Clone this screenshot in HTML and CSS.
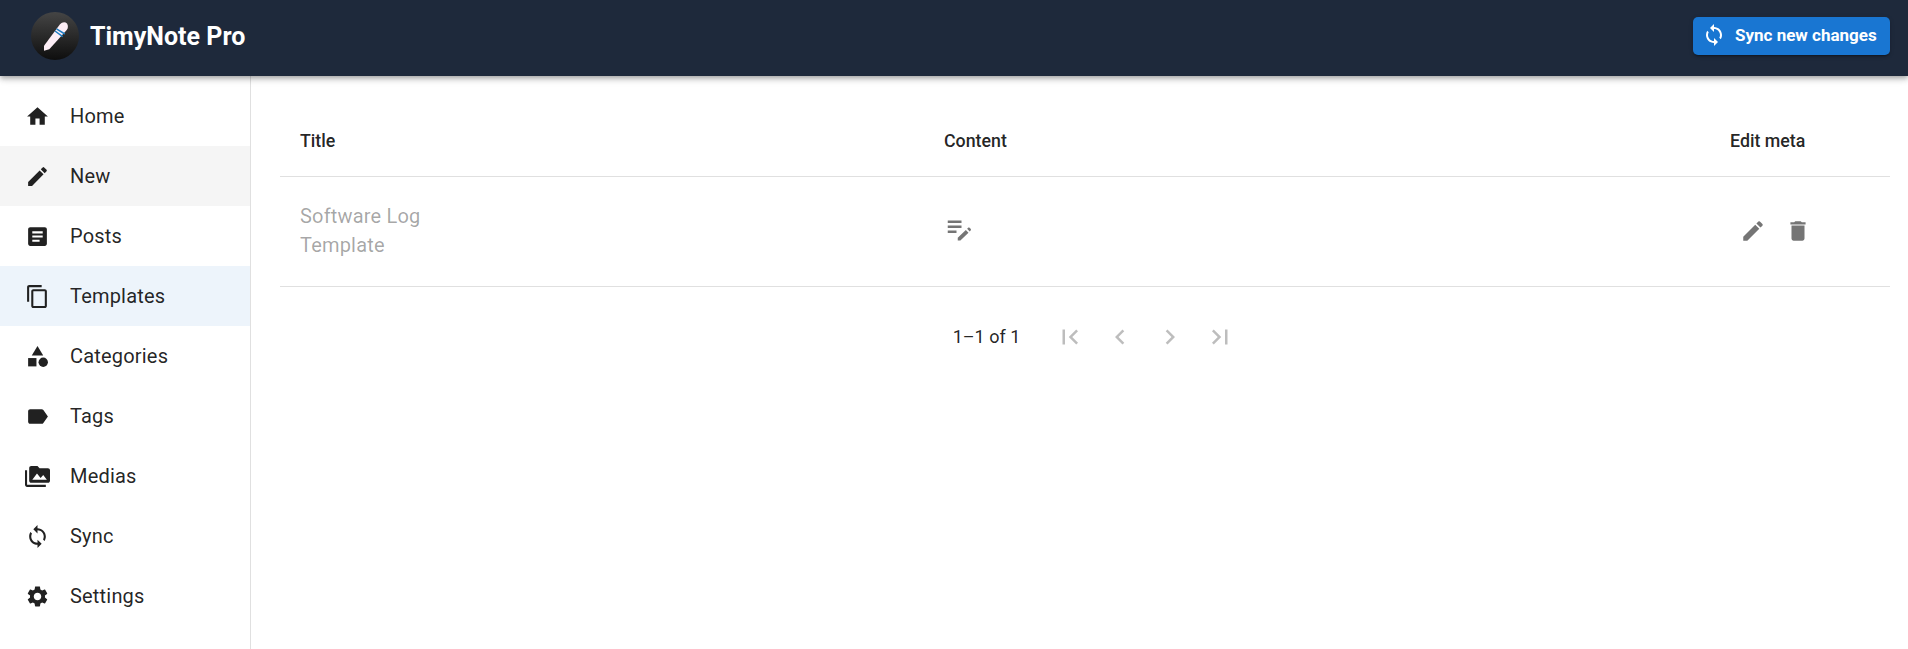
FILE: index.html
```html
<!DOCTYPE html>
<html lang="en">
<head>
    <meta charset="UTF-8">
    <meta name="viewport" content="width=device-width, initial-scale=1.0">
    <title>TimyNote Pro</title>
    <link rel="stylesheet" href="styles.css">
</head>
<body>
    <header class="topbar">
        <div class="brand">
            <svg class="brand-logo" viewBox="0 0 48 48">
                <defs>
                    <linearGradient id="logoFill" x1="0" y1="0" x2="0" y2="1">
                        <stop offset="0" stop-color="#454545"/>
                        <stop offset="1" stop-color="#0e0e0e"/>
                    </linearGradient>
                </defs>
                <circle cx="24" cy="24" r="24" fill="url(#logoFill)"/>
                <path d="M13 38.7 13 33.7 29 12.3C31 10 34 9.5 36 11.5 37.5 13.5 37 16.5 35.7 18L18.3 37.3Z" fill="#fdeef6"/>
                <path d="M25.5 16.8 33.8 22M24 19 31.7 24.7" stroke="#1f7fc4" stroke-width="1.5" fill="none"/>
            </svg>
            <span class="brand-name">TimyNote Pro</span>
        </div>
        <button class="sync-btn">
            <svg class="icon" viewBox="0 0 24 24"><path d="M12 4V1L8 5l4 4V6c3.31 0 6 2.69 6 6 0 1.01-.25 1.97-.7 2.8l1.46 1.46C19.54 15.03 20 13.57 20 12c0-4.42-3.58-8-8-8zm0 14c-3.31 0-6-2.69-6-6 0-1.01.25-1.97.7-2.8L5.24 7.74C4.46 8.97 4 10.43 4 12c0 4.42 3.58 8 8 8v3l4-4-4-4v3z"/></svg>
            Sync new changes
        </button>
    </header>

    <div class="layout">
        <nav class="sidebar">
            <a class="nav-item">
                <svg class="icon" viewBox="0 0 24 24"><path d="M10 20v-6h4v6h5v-8h3L12 3 2 12h3v8z"/></svg>
                Home
            </a>
            <a class="nav-item hovered">
                <svg class="icon" viewBox="0 0 24 24"><path d="M3 17.25V21h3.75L17.81 9.94l-3.75-3.75L3 17.25zM20.71 7.04c.39-.39.39-1.02 0-1.41l-2.34-2.34a.9959.9959 0 0 0-1.41 0l-1.83 1.83 3.75 3.75 1.83-1.83z"/></svg>
                New
            </a>
            <a class="nav-item">
                <svg class="icon" viewBox="0 0 24 24"><path d="M19 3H5c-1.1 0-2 .9-2 2v14c0 1.1.9 2 2 2h14c1.1 0 2-.9 2-2V5c0-1.1-.9-2-2-2zm-5 14H7v-2h7v2zm3-4H7v-2h10v2zm0-4H7V7h10v2z"/></svg>
                Posts
            </a>
            <a class="nav-item selected">
                <svg class="icon" viewBox="0 0 24 24"><path d="M16 1H4c-1.1 0-2 .9-2 2v14h2V3h12V1zm3 4H8c-1.1 0-2 .9-2 2v14c0 1.1.9 2 2 2h11c1.1 0 2-.9 2-2V7c0-1.1-.9-2-2-2zm0 16H8V7h11v14z"/></svg>
                Templates
            </a>
            <a class="nav-item">
                <svg class="icon" viewBox="0 0 24 24"><path d="M12 2l-5.5 9h11z"/><circle cx="17.5" cy="17.5" r="4.5"/><path d="M3 13.5h8v8H3z"/></svg>
                Categories
            </a>
            <a class="nav-item">
                <svg class="icon" viewBox="0 0 24 24"><path d="M17.63 5.84C17.27 5.33 16.67 5 16 5L5 5.01C3.9 5.01 3 5.9 3 7v10c0 1.1.9 1.99 2 1.99L16 19c.67 0 1.27-.33 1.63-.84L22 12l-4.37-6.16z"/></svg>
                Tags
            </a>
            <a class="nav-item">
                <svg class="icon" viewBox="0 0 24 24"><path d="M2 6H0v5h.01L0 20c0 1.1.9 2 2 2h18v-2H2V6zm20-2h-8l-2-2H6c-1.1 0-1.99.9-1.99 2L4 16c0 1.1.9 2 2 2h16c1.1 0 2-.9 2-2V6c0-1.1-.9-2-2-2zM7 15l4.5-6 3.5 4.51 2.5-3.01L21 15H7z"/></svg>
                Medias
            </a>
            <a class="nav-item">
                <svg class="icon" viewBox="0 0 24 24"><path d="M12 4V1L8 5l4 4V6c3.31 0 6 2.69 6 6 0 1.01-.25 1.97-.7 2.8l1.46 1.46C19.54 15.03 20 13.57 20 12c0-4.42-3.58-8-8-8zm0 14c-3.31 0-6-2.69-6-6 0-1.01.25-1.97.7-2.8L5.24 7.74C4.46 8.97 4 10.43 4 12c0 4.42 3.58 8 8 8v3l4-4-4-4v3z"/></svg>
                Sync
            </a>
            <a class="nav-item">
                <svg class="icon" viewBox="0 0 24 24"><path d="M19.14 12.94c.04-.3.06-.61.06-.94 0-.32-.02-.64-.07-.94l2.03-1.58c.18-.14.23-.41.12-.61l-1.92-3.32c-.12-.22-.37-.29-.59-.22l-2.39.96c-.5-.38-1.03-.7-1.62-.94l-.36-2.54c-.04-.24-.24-.41-.48-.41h-3.84c-.24 0-.43.17-.47.41l-.36 2.54c-.59.24-1.13.57-1.62.94l-2.39-.96c-.22-.08-.47 0-.59.22L2.74 8.87c-.12.21-.08.47.12.61l2.03 1.58c-.05.3-.09.63-.09.94s.02.64.07.94l-2.03 1.58c-.18.14-.23.41-.12.61l1.92 3.32c.12.22.37.29.59.22l2.39-.96c.5.38 1.03.7 1.62.94l.36 2.54c.05.24.24.41.48.41h3.84c.24 0 .44-.17.47-.41l.36-2.54c.59-.24 1.13-.56 1.62-.94l2.39.96c.22.08.47 0 .59-.22l1.92-3.32c.12-.22.07-.47-.12-.61l-2.01-1.58zM12 15.6c-1.98 0-3.6-1.62-3.6-3.6s1.62-3.6 3.6-3.6 3.6 1.62 3.6 3.6-1.62 3.6-3.6 3.6z"/></svg>
                Settings
            </a>
        </nav>

        <main class="content">
            <table class="data-table">
                <colgroup>
                    <col class="col-title">
                    <col class="col-content">
                    <col class="col-meta">
                </colgroup>
                <thead>
                    <tr>
                        <th>Title</th>
                        <th>Content</th>
                        <th>Edit meta</th>
                    </tr>
                </thead>
                <tbody>
                    <tr>
                        <td class="title-cell">Software Log<br>Template</td>
                        <td>
                            <button class="icon-btn content-btn">
                                <svg class="icon" viewBox="0 0 24 24"><path d="M3 10h11v2H3zm0-4h11v2H3zm0 8h7v2H3zm17.59-2.07.71.71c.39.39.39 1.02 0 1.41l-.71.71-2.12-2.12.71-.71c.39-.39 1.02-.39 1.41 0zM17.47 13.64l2.12 2.12L13.12 22H11v-2.12z"/></svg>
                            </button>
                        </td>
                        <td>
                            <div class="row-actions">
                                <button class="icon-btn">
                                    <svg class="icon" viewBox="0 0 24 24"><path d="M3 17.25V21h3.75L17.81 9.94l-3.75-3.75L3 17.25zM20.71 7.04c.39-.39.39-1.02 0-1.41l-2.34-2.34a.9959.9959 0 0 0-1.41 0l-1.83 1.83 3.75 3.75 1.83-1.83z"/></svg>
                                </button>
                                <button class="icon-btn">
                                    <svg class="icon" viewBox="0 0 24 24"><path d="M6 19c0 1.1.9 2 2 2h8c1.1 0 2-.9 2-2V7H6v12zM19 4h-3.5l-1-1h-5l-1 1H5v2h14V4z"/></svg>
                                </button>
                            </div>
                        </td>
                    </tr>
                </tbody>
            </table>

            <div class="pagination">
                <span class="page-count">1–1 of 1</span>
                <div class="page-btns">
                    <button class="page-btn" disabled>
                        <svg class="icon" viewBox="0 0 24 24"><path d="M18.41 16.59 13.82 12l4.59-4.59L17 6l-6 6 6 6zM6 6h2v12H6z"/></svg>
                    </button>
                    <button class="page-btn" disabled>
                        <svg class="icon" viewBox="0 0 24 24"><path d="M15.41 7.41 14 6l-6 6 6 6 1.41-1.41L10.83 12z"/></svg>
                    </button>
                    <button class="page-btn" disabled>
                        <svg class="icon" viewBox="0 0 24 24"><path d="M10 6 8.59 7.41 13.17 12l-4.58 4.59L10 18l6-6z"/></svg>
                    </button>
                    <button class="page-btn" disabled>
                        <svg class="icon" viewBox="0 0 24 24"><path d="M5.59 7.41 10.18 12l-4.59 4.59L7 18l6-6-6-6zM16 6h2v12h-2z"/></svg>
                    </button>
                </div>
            </div>
        </main>
    </div>
</body>
</html>
```

FILE: styles.css
```css
* {
    box-sizing: border-box;
}

html, body {
    height: 100%;
}

body {
    margin: 0;
    display: flex;
    flex-direction: column;
    overflow: hidden;
    font-family: Roboto, "Liberation Sans", sans-serif;
    color: rgba(0, 0, 0, 0.87);
    background-color: #fff;
}

.icon {
    display: block;
    fill: currentColor;
}

/* top bar */
.topbar {
    position: relative;
    z-index: 2;
    flex: 0 0 76px;
    display: flex;
    align-items: center;
    justify-content: space-between;
    padding: 0 18px 4px 31px;
    background-color: #1e293b;
    box-shadow: 0 2px 4px -1px rgba(0, 0, 0, 0.2), 0 4px 5px 0 rgba(0, 0, 0, 0.14), 0 1px 10px 0 rgba(0, 0, 0, 0.12);
}

.brand {
    display: flex;
    align-items: center;
    gap: 11px;
}

.brand-logo {
    display: block;
    width: 48px;
    height: 48px;
}

.brand-name {
    font-size: 25px;
    font-weight: 700;
    color: #fff;
}

.sync-btn {
    display: flex;
    align-items: center;
    gap: 9px;
    width: 197px;
    height: 38px;
    padding: 0 0 3px 9px;
    border: none;
    border-radius: 5px;
    background-color: #1976d2;
    color: #fff;
    font-family: inherit;
    font-size: 17px;
    font-weight: 700;
    white-space: nowrap;
    box-shadow: 0 3px 1px -2px rgba(0, 0, 0, 0.2), 0 2px 2px 0 rgba(0, 0, 0, 0.14), 0 1px 5px 0 rgba(0, 0, 0, 0.12);
}

.sync-btn .icon {
    width: 24px;
    height: 24px;
}

/* sidebar */
.layout {
    flex: 1;
    display: flex;
    min-height: 0;
}

.sidebar {
    flex: 0 0 251px;
    padding-top: 10px;
    border-right: 1px solid #e0e0e0;
}

.nav-item {
    display: flex;
    align-items: center;
    height: 60px;
    padding-left: 25px;
    font-size: 20px;
    letter-spacing: 0.19px;
    color: rgba(0, 0, 0, 0.87);
}

.nav-item .icon {
    width: 25px;
    height: 25px;
    margin-right: 20px;
    color: #212121;
}

.nav-item.hovered {
    background-color: #f5f5f5;
}

.nav-item.selected {
    background-color: #edf4fb;
}

/* table */
.content {
    flex: 1;
    min-width: 0;
    padding: 28px 18px 0 29px;
}

.data-table {
    width: 100%;
    table-layout: fixed;
    border-collapse: collapse;
}

.col-title {
    width: 644px;
}

.col-meta {
    width: 180px;
}

.data-table th {
    height: 72px;
    padding: 1px 20px 0;
    border-bottom: 1px solid #e0e0e0;
    text-align: left;
    font-size: 17.8px;
    font-weight: 500;
}

.data-table td {
    height: 110px;
    padding: 0 20px;
    border-bottom: 1px solid #e0e0e0;
}

.title-cell {
    font-size: 20px;
    line-height: 29px;
    letter-spacing: 0.19px;
    color: rgba(0, 0, 0, 0.36);
}

.icon-btn {
    display: flex;
    align-items: center;
    justify-content: center;
    width: 45px;
    height: 46px;
    padding: 0;
    border: none;
    background: none;
    color: #757575;
}

.icon-btn .icon {
    width: 26px;
    height: 26px;
}

.content-btn {
    width: 30px;
    margin-bottom: 7px;
}

.content-btn .icon {
    width: 30px;
    height: 30px;
}

.row-actions {
    display: flex;
}

/* pagination */
.pagination {
    display: flex;
    align-items: center;
    justify-content: center;
    gap: 25px;
    height: 100px;
    padding-left: 28px;
}

.page-count {
    font-size: 18px;
}

.page-btns {
    display: flex;
}

.page-btn {
    width: 50px;
    height: 50px;
    padding: 10px;
    border: none;
    background: none;
    color: rgba(0, 0, 0, 0.26);
}

.page-btn .icon {
    width: 30px;
    height: 30px;
}
```
